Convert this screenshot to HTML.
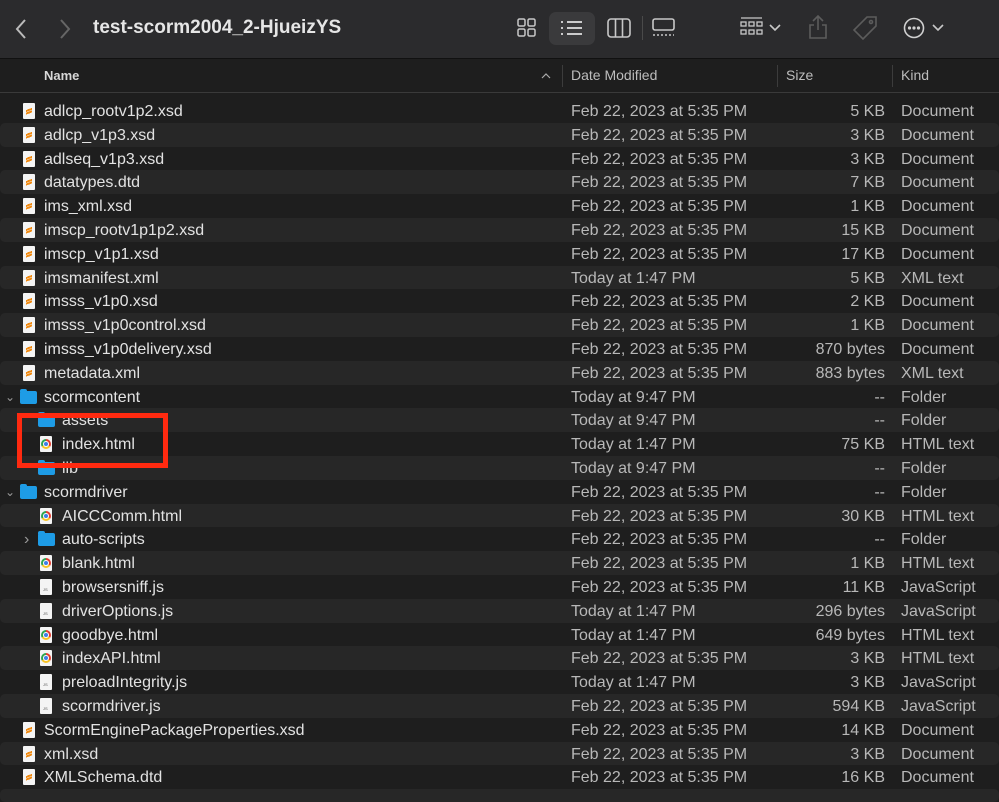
<!DOCTYPE html>
<html><head><meta charset="utf-8">
<style>
*{margin:0;padding:0;box-sizing:border-box}
html,body{width:999px;height:802px;overflow:hidden}
body{background:#1e1e1e;font-family:"Liberation Sans",sans-serif;position:relative;color:#dcdcdc}
.tb{position:absolute;left:0;top:0;width:999px;height:59px;background:#2b2b2d;border-bottom:1px solid #111}
.title{position:absolute;left:93px;top:17px;font-size:19px;font-weight:bold;color:#e6e6e6}
.hdr{position:absolute;left:0;top:60px;width:999px;height:33px;border-bottom:1px solid #3a3a3a;font-size:14px;color:#bdbdbd}
.hdr span{position:absolute;top:7px}
.sep{position:absolute;top:5px;width:1px;height:22px;background:#3c3c3c}
.row{position:absolute;left:0;width:999px;height:23.8px;font-size:16px;line-height:25px}
.row.s{background:#272727;border-radius:5px}
.row .n{position:absolute;left:44px;color:#e2e2e2}
.row.i .n{left:62px}
.row .d{position:absolute;left:571px;color:#b8b8b8}
.row .z{position:absolute;right:114px;color:#b8b8b8}
.row .k{position:absolute;left:901px;color:#b8b8b8}
.ic{position:absolute;top:4px;width:12px;height:16px}
.doc{background:#f4f4f4;border-radius:1px}
.doc.x::after{content:"";position:absolute;left:3px;top:4px;width:6px;height:8px;background:linear-gradient(160deg,transparent 30%,#f08a12 30%,#f08a12 50%,transparent 50%),linear-gradient(160deg,transparent 55%,#f08a12 55%,#f08a12 75%,transparent 75%)}
.doc.j::after{content:"JS";position:absolute;left:3px;top:9px;font-size:4px;line-height:4px;color:#555}
.doc.c::after{content:"";position:absolute;left:1px;top:3px;width:10px;height:10px;border-radius:50%;background:conic-gradient(#e33b2e 0 120deg,#f7c325 120deg 240deg,#2ea44f 240deg 360deg)}
.doc.c::before{content:"";position:absolute;left:4px;top:6px;width:4px;height:4px;border-radius:50%;background:#3d7ee6;z-index:2;box-shadow:0 0 0 1px #fff}
.fold{top:6px;width:17px;height:13px;background:#1e9ce6;border-radius:2px}
.fold::before{content:"";position:absolute;left:0;top:-2px;width:7px;height:3px;background:#1e9ce6;border-radius:2px 2px 0 0}
.ch{position:absolute;top:0;font-size:12px;color:#9a9a9a}
.red{position:absolute;left:17px;top:413px;width:151px;height:55px;border:5px solid #ff2a10}
</style></head><body>
<div class="tb">
<svg style="position:absolute;left:14px;top:18px" width="14" height="22"><path d="M11 2 L3 11 L11 20" stroke="#bbb" stroke-width="2" fill="none"/></svg>
<svg style="position:absolute;left:58px;top:18px" width="14" height="22"><path d="M3 2 L11 11 L3 20" stroke="#666" stroke-width="2" fill="none"/></svg>
<div class="title">test-scorm2004_2-HjueizYS</div>
<svg style="position:absolute;left:517px;top:18px" width="20" height="20" fill="none" stroke="#c8c8c8" stroke-width="1.5"><rect x="1" y="1" width="7" height="7" rx="1.5"/><rect x="11" y="1" width="7" height="7" rx="1.5"/><rect x="1" y="11" width="7" height="7" rx="1.5"/><rect x="11" y="11" width="7" height="7" rx="1.5"/></svg>
<div style="position:absolute;left:549px;top:12px;width:46px;height:33px;background:#3a3a3c;border-radius:7px"></div>
<svg style="position:absolute;left:560px;top:19px" width="24" height="18" stroke="#e0e0e0" stroke-width="1.8"><path d="M7 3H22M7 9H22M7 15H22M1 3H3M1 9H3M1 15H3"/></svg>
<svg style="position:absolute;left:607px;top:17px" width="25" height="22" fill="none" stroke="#c8c8c8" stroke-width="1.6"><rect x="1" y="2" width="22" height="18" rx="3"/><path d="M8.5 2V20M15.5 2V20"/></svg>
<div style="position:absolute;left:642px;top:16px;width:1px;height:24px;background:#4a4a4a"></div>
<svg style="position:absolute;left:651px;top:18px" width="25" height="20" fill="none" stroke="#c8c8c8" stroke-width="1.6"><rect x="2" y="1" width="21" height="11" rx="2"/><path d="M2 17H23" stroke-dasharray="2 2"/></svg>
<svg style="position:absolute;left:740px;top:17px" width="24" height="22" fill="none" stroke="#c8c8c8" stroke-width="1.3"><path d="M1 1H22"/><rect x="1" y="5" width="5" height="4"/><rect x="9" y="5" width="5" height="4"/><rect x="17" y="5" width="5" height="4"/><rect x="1" y="13" width="5" height="4"/><rect x="9" y="13" width="5" height="4"/><rect x="17" y="13" width="5" height="4"/></svg>
<svg style="position:absolute;left:769px;top:24px" width="12" height="8"><path d="M1 1L6 6L11 1" stroke="#c8c8c8" stroke-width="1.6" fill="none"/></svg>
<svg style="position:absolute;left:808px;top:14px" width="20" height="26" fill="none" stroke="#5c5c5c" stroke-width="1.6"><path d="M10 2V16M5 7L10 2L15 7M6 11H2V24H18V11H14"/></svg>
<svg style="position:absolute;left:851px;top:15px" width="28" height="28" fill="none" stroke="#5c5c5c" stroke-width="1.6"><path d="M16 2H25V11L12 24L3 15Z"/><circle cx="20" cy="7" r="1.5"/></svg>
<svg style="position:absolute;left:903px;top:17px" width="22" height="22" fill="none" stroke="#d0d0d0" stroke-width="1.6"><circle cx="11" cy="11" r="9.5"/><circle cx="6.5" cy="11" r=".8" fill="#d0d0d0"/><circle cx="11" cy="11" r=".8" fill="#d0d0d0"/><circle cx="15.5" cy="11" r=".8" fill="#d0d0d0"/></svg>
<svg style="position:absolute;left:932px;top:24px" width="12" height="8"><path d="M1 1L6 6L11 1" stroke="#c8c8c8" stroke-width="1.6" fill="none"/></svg>
</div>
<div class="hdr">
<span style="left:44px;font-weight:bold;color:#d8d8d8;font-size:13px;top:8px">Name</span>
<svg style="position:absolute;left:541px;top:12px" width="10" height="7"><path d="M1 6L5 2L9 6" stroke="#aaa" stroke-width="1.2" fill="none"/></svg>
<div class="sep" style="left:562px"></div><span style="left:571px">Date Modified</span>
<div class="sep" style="left:777px"></div><span style="left:786px">Size</span>
<div class="sep" style="left:892px"></div><span style="left:901px">Kind</span>
</div>

<div class="row" style="top:99px"><div class="ic doc x" style="left:23px"></div><span class="n">adlcp_rootv1p2.xsd</span><span class="d">Feb 22, 2023 at 5:35 PM</span><span class="z">5 KB</span><span class="k">Document</span></div>
<div class="row s" style="top:122.8px"><div class="ic doc x" style="left:23px"></div><span class="n">adlcp_v1p3.xsd</span><span class="d">Feb 22, 2023 at 5:35 PM</span><span class="z">3 KB</span><span class="k">Document</span></div>
<div class="row" style="top:146.6px"><div class="ic doc x" style="left:23px"></div><span class="n">adlseq_v1p3.xsd</span><span class="d">Feb 22, 2023 at 5:35 PM</span><span class="z">3 KB</span><span class="k">Document</span></div>
<div class="row s" style="top:170.4px"><div class="ic doc x" style="left:23px"></div><span class="n">datatypes.dtd</span><span class="d">Feb 22, 2023 at 5:35 PM</span><span class="z">7 KB</span><span class="k">Document</span></div>
<div class="row" style="top:194.2px"><div class="ic doc x" style="left:23px"></div><span class="n">ims_xml.xsd</span><span class="d">Feb 22, 2023 at 5:35 PM</span><span class="z">1 KB</span><span class="k">Document</span></div>
<div class="row s" style="top:218px"><div class="ic doc x" style="left:23px"></div><span class="n">imscp_rootv1p1p2.xsd</span><span class="d">Feb 22, 2023 at 5:35 PM</span><span class="z">15 KB</span><span class="k">Document</span></div>
<div class="row" style="top:241.8px"><div class="ic doc x" style="left:23px"></div><span class="n">imscp_v1p1.xsd</span><span class="d">Feb 22, 2023 at 5:35 PM</span><span class="z">17 KB</span><span class="k">Document</span></div>
<div class="row s" style="top:265.6px"><div class="ic doc x" style="left:23px"></div><span class="n">imsmanifest.xml</span><span class="d">Today at 1:47 PM</span><span class="z">5 KB</span><span class="k">XML text</span></div>
<div class="row" style="top:289.4px"><div class="ic doc x" style="left:23px"></div><span class="n">imsss_v1p0.xsd</span><span class="d">Feb 22, 2023 at 5:35 PM</span><span class="z">2 KB</span><span class="k">Document</span></div>
<div class="row s" style="top:313.2px"><div class="ic doc x" style="left:23px"></div><span class="n">imsss_v1p0control.xsd</span><span class="d">Feb 22, 2023 at 5:35 PM</span><span class="z">1 KB</span><span class="k">Document</span></div>
<div class="row" style="top:337px"><div class="ic doc x" style="left:23px"></div><span class="n">imsss_v1p0delivery.xsd</span><span class="d">Feb 22, 2023 at 5:35 PM</span><span class="z">870 bytes</span><span class="k">Document</span></div>
<div class="row s" style="top:360.8px"><div class="ic doc x" style="left:23px"></div><span class="n">metadata.xml</span><span class="d">Feb 22, 2023 at 5:35 PM</span><span class="z">883 bytes</span><span class="k">XML text</span></div>
<div class="row" style="top:384.6px"><span class="ch" style="left:5px">⌄</span><div class="ic fold" style="left:20px"></div><span class="n">scormcontent</span><span class="d">Today at 9:47 PM</span><span class="z">--</span><span class="k">Folder</span></div>
<div class="row s i" style="top:408.4px"><div class="ic fold" style="left:38px"></div><span class="n">assets</span><span class="d">Today at 9:47 PM</span><span class="z">--</span><span class="k">Folder</span></div>
<div class="row i" style="top:432.2px"><div class="ic doc c" style="left:40px"></div><span class="n">index.html</span><span class="d">Today at 1:47 PM</span><span class="z">75 KB</span><span class="k">HTML text</span></div>
<div class="row s i" style="top:456px"><div class="ic fold" style="left:38px"></div><span class="n">lib</span><span class="d">Today at 9:47 PM</span><span class="z">--</span><span class="k">Folder</span></div>
<div class="row" style="top:479.8px"><span class="ch" style="left:5px">⌄</span><div class="ic fold" style="left:20px"></div><span class="n">scormdriver</span><span class="d">Feb 22, 2023 at 5:35 PM</span><span class="z">--</span><span class="k">Folder</span></div>
<div class="row s i" style="top:503.6px"><div class="ic doc c" style="left:40px"></div><span class="n">AICCComm.html</span><span class="d">Feb 22, 2023 at 5:35 PM</span><span class="z">30 KB</span><span class="k">HTML text</span></div>
<div class="row i" style="top:527.4px"><span class="ch" style="left:24px;font-size:16px">›</span><div class="ic fold" style="left:38px"></div><span class="n">auto-scripts</span><span class="d">Feb 22, 2023 at 5:35 PM</span><span class="z">--</span><span class="k">Folder</span></div>
<div class="row s i" style="top:551.2px"><div class="ic doc c" style="left:40px"></div><span class="n">blank.html</span><span class="d">Feb 22, 2023 at 5:35 PM</span><span class="z">1 KB</span><span class="k">HTML text</span></div>
<div class="row i" style="top:575px"><div class="ic doc j" style="left:40px"></div><span class="n">browsersniff.js</span><span class="d">Feb 22, 2023 at 5:35 PM</span><span class="z">11 KB</span><span class="k">JavaScript</span></div>
<div class="row s i" style="top:598.8px"><div class="ic doc j" style="left:40px"></div><span class="n">driverOptions.js</span><span class="d">Today at 1:47 PM</span><span class="z">296 bytes</span><span class="k">JavaScript</span></div>
<div class="row i" style="top:622.6px"><div class="ic doc c" style="left:40px"></div><span class="n">goodbye.html</span><span class="d">Today at 1:47 PM</span><span class="z">649 bytes</span><span class="k">HTML text</span></div>
<div class="row s i" style="top:646.4px"><div class="ic doc c" style="left:40px"></div><span class="n">indexAPI.html</span><span class="d">Feb 22, 2023 at 5:35 PM</span><span class="z">3 KB</span><span class="k">HTML text</span></div>
<div class="row i" style="top:670.2px"><div class="ic doc j" style="left:40px"></div><span class="n">preloadIntegrity.js</span><span class="d">Today at 1:47 PM</span><span class="z">3 KB</span><span class="k">JavaScript</span></div>
<div class="row s i" style="top:694px"><div class="ic doc j" style="left:40px"></div><span class="n">scormdriver.js</span><span class="d">Feb 22, 2023 at 5:35 PM</span><span class="z">594 KB</span><span class="k">JavaScript</span></div>
<div class="row" style="top:717.8px"><div class="ic doc x" style="left:23px"></div><span class="n">ScormEnginePackageProperties.xsd</span><span class="d">Feb 22, 2023 at 5:35 PM</span><span class="z">14 KB</span><span class="k">Document</span></div>
<div class="row s" style="top:741.6px"><div class="ic doc x" style="left:23px"></div><span class="n">xml.xsd</span><span class="d">Feb 22, 2023 at 5:35 PM</span><span class="z">3 KB</span><span class="k">Document</span></div>
<div class="row" style="top:765.4px"><div class="ic doc x" style="left:23px"></div><span class="n">XMLSchema.dtd</span><span class="d">Feb 22, 2023 at 5:35 PM</span><span class="z">16 KB</span><span class="k">Document</span></div>
<div class="row s" style="top:789.2px;height:12.8px"></div>
<div class="red"></div>
</body></html>
